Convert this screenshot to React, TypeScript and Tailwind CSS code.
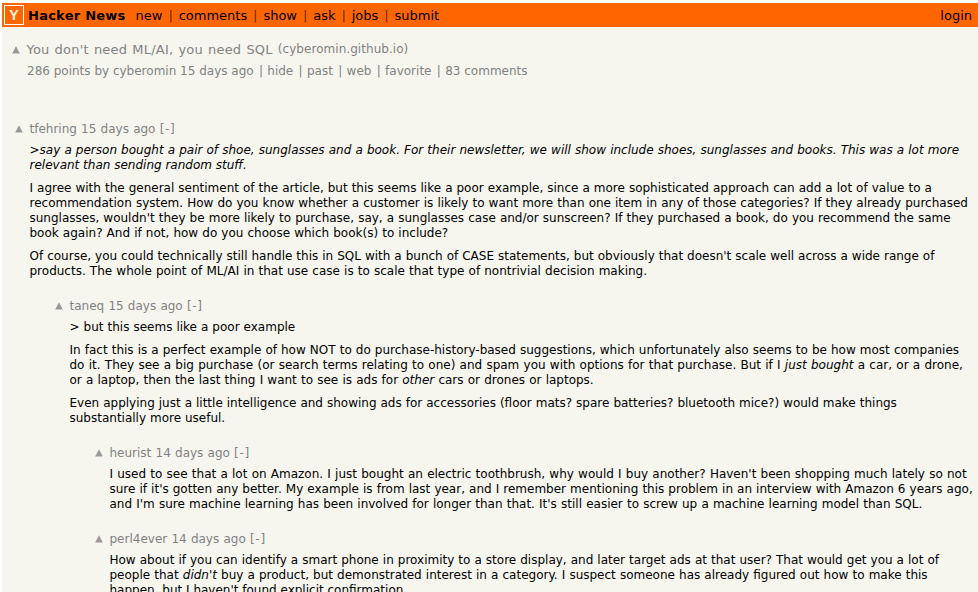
import React from "react";

type LineProps = { children: React.ReactNode; className?: string };

function Line({ children, className = "" }: LineProps) {
  return <span className={`block w-max whitespace-pre ${className}`}>{children}</span>;
}

function Arrow({ className = "" }: { className?: string }) {
  return (
    <svg width="8" height="8" viewBox="0 0 8 8" className={`block shrink-0 ${className}`} aria-hidden="true">
      <path d="M4 0.3 L7.8 7.5 L0.2 7.5 Z" fill="#999999" />
    </svg>
  );
}

function Comment({ by, indent, children }: { by: string; indent: string; children: React.ReactNode }) {
  return (
    <article className={indent}>
      <header className="flex h-[15px] items-center text-[#828282]">
        <Arrow className="mb-[2px]" />
        <span className="ml-[6.5px] whitespace-pre [word-spacing:0.4px]">{by} </span>
        <span className="tracking-[0.7px]">[-]</span>
      </header>
      <div className="ml-[14.5px] mt-[6px] flex flex-col gap-2 text-black">{children}</div>
    </article>
  );
}

const links = ["new", "comments", "show", "ask", "jobs", "submit"];
const details = ["286 points by cyberomin 15 days ago", "hide", "past", "web", "favorite", "83 comments"];

export default function App() {
  return (
    <div className="h-[592px] w-[978px] overflow-hidden bg-white pl-[2px] pt-[3px] font-['Verdana','DejaVu_Sans',sans-serif] text-[12px] leading-[15px]">
      <div className="h-full bg-[#f6f6ef]">
        <nav className="flex h-6 items-center bg-[#ff6600] pl-[2px] pr-[6px] text-[13px] text-black">
          <div className="flex size-5 shrink-0 items-center justify-center border border-white font-['Liberation_Sans',sans-serif] text-[14px] font-bold text-[#fff3e6]">
            Y
          </div>
          <span className="ml-1 font-bold tracking-[0.25px]">Hacker News</span>
          <div className="ml-[10px] flex">
            {links.map((l, i) => (
              <React.Fragment key={l}>
                {i > 0 && <span className="w-[16.2px] text-center text-[#6b2b00]">|</span>}
                <span>{l}</span>
              </React.Fragment>
            ))}
          </div>
          <span className="ml-auto">login</span>
        </nav>

        <section className="pl-[10px] pt-[14px] text-[#828282]">
          <div className="flex h-4 items-center">
            <Arrow className="mt-[2px]" />
            <span className="ml-[6.5px] text-[13px] tracking-[0.22px] [word-spacing:0.7px]">You don't need ML/AI, you need SQL</span>
            <span className="ml-[5px] tracking-[0.05px]">(cyberomin.github.io)</span>
          </div>
          <div className="ml-[15px] mt-[7px] flex">
            {details.map((d, i) => (
              <React.Fragment key={d}>
                {i > 0 && <span className="w-[13.7px] pl-[1px] text-center">|</span>}
                <span>{d}</span>
              </React.Fragment>
            ))}
          </div>
        </section>

        <main className="mt-[43px] flex flex-col">
          <Comment by="tfehring 15 days ago" indent="pl-[13px]">
            <p className="italic">
              <Line className="[word-spacing:0.3px]"><span className="not-italic">&gt;</span>say a person bought a pair of shoe, sunglasses and a book. For their newsletter, we will show include shoes, sunglasses and books. This was a lot more</Line>
              <Line>relevant than sending random stuff.</Line>
            </p>
            <p>
              <Line className="[word-spacing:0.2px]">I agree with the general sentiment of the article, but this seems like a poor example, since a more sophisticated approach can add a lot of value to a</Line>
              <Line className="[word-spacing:0.25px]">recommendation system. How do you know whether a customer is likely to want more than one item in any of those categories? If they already purchased</Line>
              <Line className="[word-spacing:0.28px]">sunglasses, wouldn't they be more likely to purchase, say, a sunglasses case and/or sunscreen? If they purchased a book, do you recommend the same</Line>
              <Line className="[word-spacing:0.3px]">book again? And if not, how do you choose which book(s) to include?</Line>
            </p>
            <p>
              <Line className="[word-spacing:0.17px]">Of course, you could technically still handle this in SQL with a bunch of CASE statements, but obviously that doesn't scale well across a wide range of</Line>
              <Line className="[word-spacing:0.33px]">products. The whole point of ML/AI in that use case is to scale that type of nontrivial decision making.</Line>
            </p>
          </Comment>

          <Comment by="taneq 15 days ago" indent="mt-5 pl-[53px]">
            <p><Line className="[word-spacing:0.2px]">&gt; but this seems like a poor example</Line></p>
            <p>
              <Line className="[word-spacing:0.26px]">In fact this is a perfect example of how NOT to do purchase-history-based suggestions, which unfortunately also seems to be how most companies</Line>
              <Line className="[word-spacing:0.43px]">do it. They see a big purchase (or search terms relating to one) and spam you with options for that purchase. But if I <i>just bought</i> a car, or a drone,</Line>
              <Line className="[word-spacing:0.36px]">or a laptop, then the last thing I want to see is ads for <i>other</i> cars or drones or laptops.</Line>
            </p>
            <p>
              <Line className="[word-spacing:0.18px]">Even applying just a little intelligence and showing ads for accessories (floor mats? spare batteries? bluetooth mice?) would make things</Line>
              <Line className="[word-spacing:0.1px]">substantially more useful.</Line>
            </p>
          </Comment>

          <Comment by="heurist 14 days ago" indent="mt-5 pl-[93px]">
            <p>
              <Line className="[word-spacing:0.41px]">I used to see that a lot on Amazon. I just bought an electric toothbrush, why would I buy another? Haven't been shopping much lately so not</Line>
              <Line className="[word-spacing:0.25px]">sure if it's gotten any better. My example is from last year, and I remember mentioning this problem in an interview with Amazon 6 years ago,</Line>
              <Line className="[word-spacing:0.34px]">and I'm sure machine learning has been involved for longer than that. It's still easier to screw up a machine learning model than SQL.</Line>
            </p>
          </Comment>

          <Comment by="perl4ever 14 days ago" indent="mt-5 pl-[93px]">
            <p>
              <Line className="[word-spacing:0.23px]">How about if you can identify a smart phone in proximity to a store display, and later target ads at that user? That would get you a lot of</Line>
              <Line className="[word-spacing:0.3px]">people that <i>didn't</i> buy a product, but demonstrated interest in a category. I suspect someone has already figured out how to make this</Line>
              <Line>happen, but I haven't found explicit confirmation.</Line>
            </p>
          </Comment>
        </main>
      </div>
    </div>
  );
}
